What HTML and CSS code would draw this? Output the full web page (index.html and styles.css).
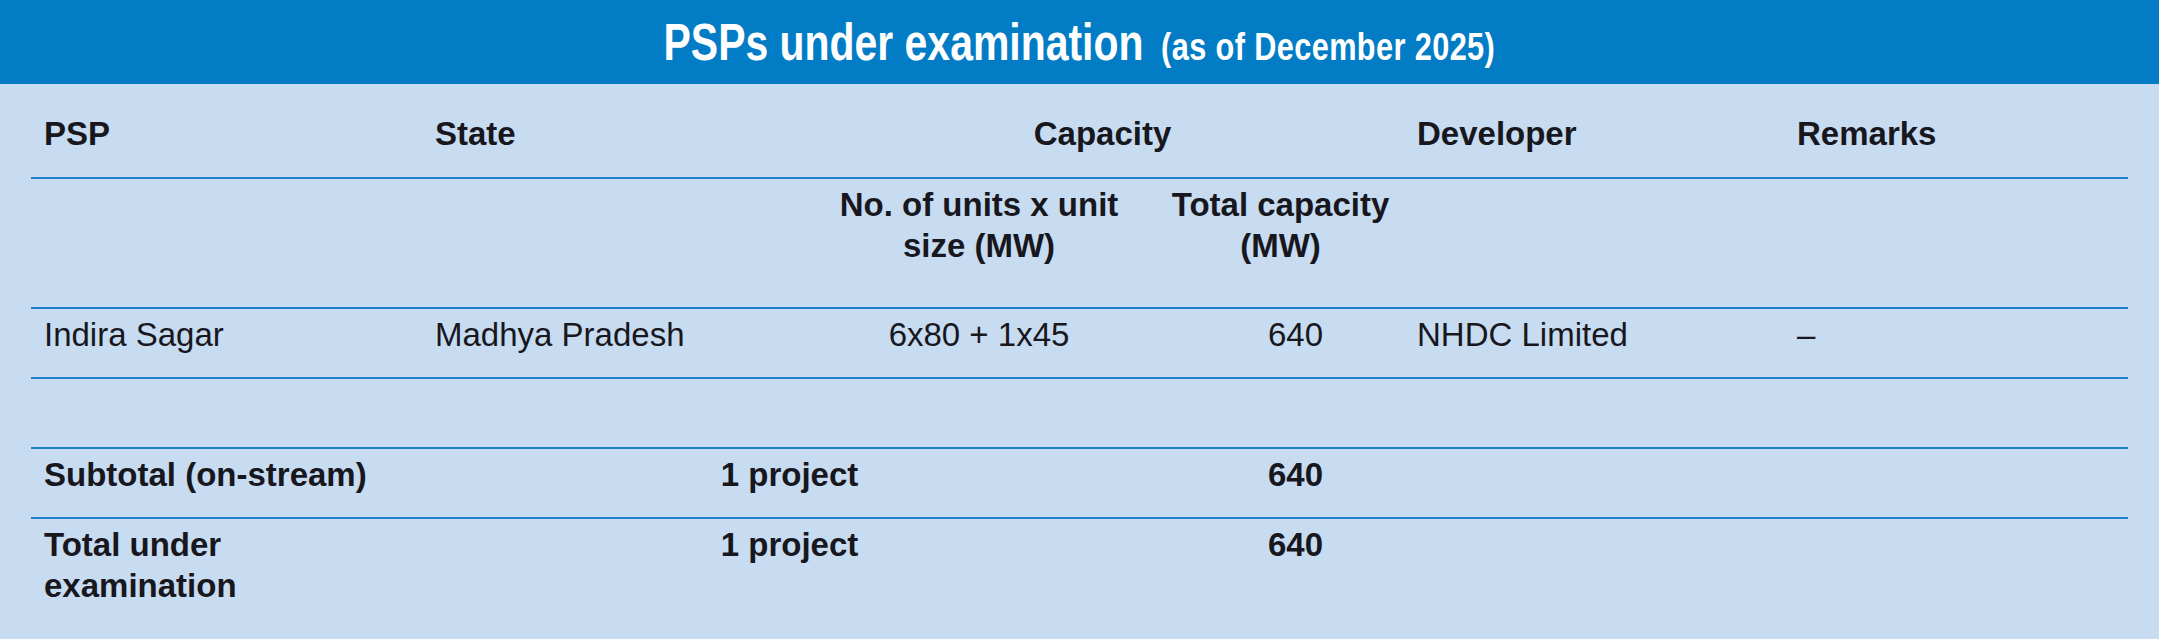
FILE: index.html
```html
<!DOCTYPE html>
<html lang="en">
<head>
<meta charset="utf-8">
<title>PSPs under examination</title>
<link rel="stylesheet" href="styles.css">
</head>
<body>
<header class="banner">
  <h1 class="title"><span class="title-main">PSPs under examination</span> <span class="title-sub">(as of December 2025)</span></h1>
</header>
<main class="table">
  <div class="row row-head">
    <div class="cell th">PSP</div>
    <div class="cell th">State</div>
    <div class="cell th span-2 center">Capacity</div>
    <div class="cell th">Developer</div>
    <div class="cell th">Remarks</div>
  </div>
  <div class="row row-sub">
    <div class="cell th col-3 center">No. of units x unit<br>size (MW)</div>
    <div class="cell th center">Total capacity<br>(MW)</div>
  </div>
  <div class="row">
    <div class="cell">Indira Sagar</div>
    <div class="cell">Madhya Pradesh</div>
    <div class="cell center">6x80 + 1x45</div>
    <div class="cell num">640</div>
    <div class="cell">NHDC Limited</div>
    <div class="cell">–</div>
  </div>
  <div class="row row-empty"></div>
  <div class="row">
    <div class="cell th">Subtotal (on-stream)</div>
    <div class="cell th span-2 center">1 project</div>
    <div class="cell th num">640</div>
  </div>
  <div class="row row-last">
    <div class="cell th">Total under examination</div>
    <div class="cell th span-2 center">1 project</div>
    <div class="cell th num">640</div>
  </div>
</main>
</body>
</html>
```

FILE: styles.css
```css
html, body {
  margin: 0;
  padding: 0;
  background: #c7dbf1;
}

body {
  width: 2159px;
  height: 639px;
  overflow: hidden;
  font-family: "Liberation Sans", Arial, sans-serif;
  color: #17171d;
}

.banner {
  height: 84px;
  background: #037cc6;
  color: #ffffff;
  text-align: center;
  font-size: 52px;
  line-height: 84px;
  overflow: hidden;
}

.title {
  display: inline-block;
  margin: 0;
  font-size: 52px;
  line-height: 84px;
  font-weight: 700;
  white-space: nowrap;
  transform: scaleX(0.787);
  transform-origin: center;
}

.title-sub {
  font-size: 39px;
  line-height: 1;
  letter-spacing: 0.5px;
  margin-left: 8px;
}

.table {
  margin: 0 31px;
}

.row {
  display: grid;
  grid-template-columns: 391px 379px 356px 247px 380px 344px;
  border-bottom: 2px solid #1d81c9;
}

.row-last {
  border-bottom: none;
}

.cell {
  padding: 5px 13px 22px 13px;
  font-size: 33px;
  line-height: 41px;
}

.row-head .cell {
  padding-top: 29px;
  padding-bottom: 23px;
}

.row-sub .cell {
  padding-bottom: 41px;
}

.row-empty {
  height: 68px;
}

.th {
  font-weight: 700;
}

.center {
  text-align: center;
  white-space: nowrap;
}

.span-2 {
  grid-column: span 2;
}

.col-3 {
  grid-column: 3;
}

.num {
  text-align: right;
  padding-right: 81px;
}
```
